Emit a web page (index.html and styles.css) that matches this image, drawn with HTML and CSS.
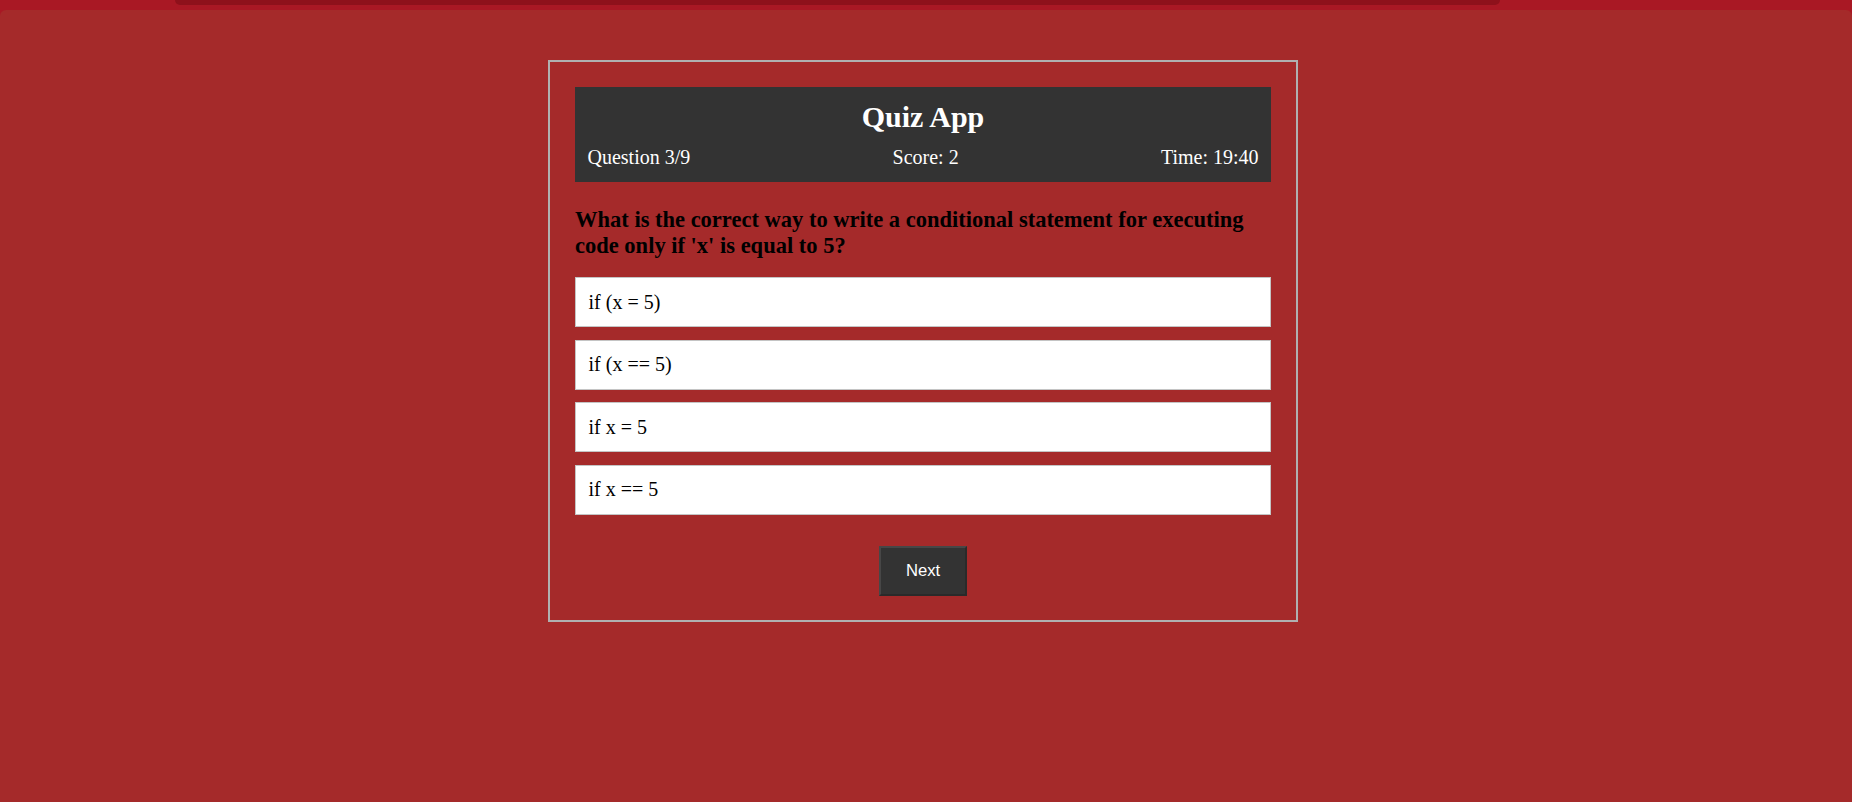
FILE: index.html
```html
<!DOCTYPE html>
<html lang="en">
<head>
<meta charset="utf-8">
<title>Quiz App</title>
<link rel="stylesheet" href="styles.css">
</head>
<body>
  <div class="chrome">
    <div class="chrome-bar"></div>
  </div>
  <main class="page">
    <div class="quiz">
      <header class="quiz-header">
        <h1 class="quiz-title">Quiz App</h1>
        <div class="quiz-info">
          <span>Question 3/9</span>
          <span>Score: 2</span>
          <span>Time: 19:40</span>
        </div>
      </header>
      <h3 class="question">What is the correct way to write a conditional statement for executing code only if 'x' is equal to 5?</h3>
      <div class="options">
        <div class="option">if (x = 5)</div>
        <div class="option">if (x == 5)</div>
        <div class="option">if x = 5</div>
        <div class="option">if x == 5</div>
      </div>
      <div class="actions">
        <button class="next-btn" type="button">Next</button>
      </div>
    </div>
  </main>
</body>
</html>
```

FILE: styles.css
```css
html, body {
  margin: 0;
  padding: 0;
}

body {
  background: #a91824;
  font-family: "Liberation Serif", "Times New Roman", serif;
  min-height: 802px;
  overflow: hidden;
}

.chrome {
  height: 10px;
  background: #a91824;
}

.chrome-bar {
  margin-left: 175px;
  width: 1325px;
  height: 5px;
  background: #8e111b;
  border-radius: 0 0 9px 9px;
}

.page {
  background: #a52a2a;
  border-radius: 6px 6px 0 0;
  min-height: 792px;
  padding-top: 50px;
  padding-right: 6px;
  box-sizing: border-box;
  display: flex;
  justify-content: center;
  align-items: flex-start;
}

.quiz {
  width: 696px;
  padding: 25px 25px 24px;
  border: 2px solid #b0b0b0;
}

.quiz-header {
  background: #333333;
  color: #ffffff;
  padding: 12.5px 12.5px 13.5px;
}

.quiz-title {
  margin: 0 0 12px;
  font-size: 30px;
  font-weight: bold;
  text-align: center;
  line-height: normal;
}

.quiz-info {
  display: flex;
  justify-content: space-between;
  font-size: 20px;
  line-height: normal;
}

.question {
  margin: 24.5px 0 18.5px;
  font-size: 22.5px;
  font-weight: bold;
  color: #000000;
  line-height: normal;
}

.options {
  display: flex;
  flex-direction: column;
  gap: 12.5px;
}

.option {
  background: #ffffff;
  border: 1px solid #c4c4c4;
  padding: 12.5px;
  font-size: 20px;
  line-height: normal;
  color: #000000;
}

.actions {
  display: flex;
  justify-content: center;
  margin-top: 31.25px;
}

.next-btn {
  font-family: "Liberation Sans", Arial, sans-serif;
  font-size: 16.67px;
  line-height: normal;
  color: #ffffff;
  background: #333333;
  padding: 13px 25px;
  border: 2px solid;
  border-color: #474747 #2a2a2a #2a2a2a #474747;
  margin: 0;
}
```
